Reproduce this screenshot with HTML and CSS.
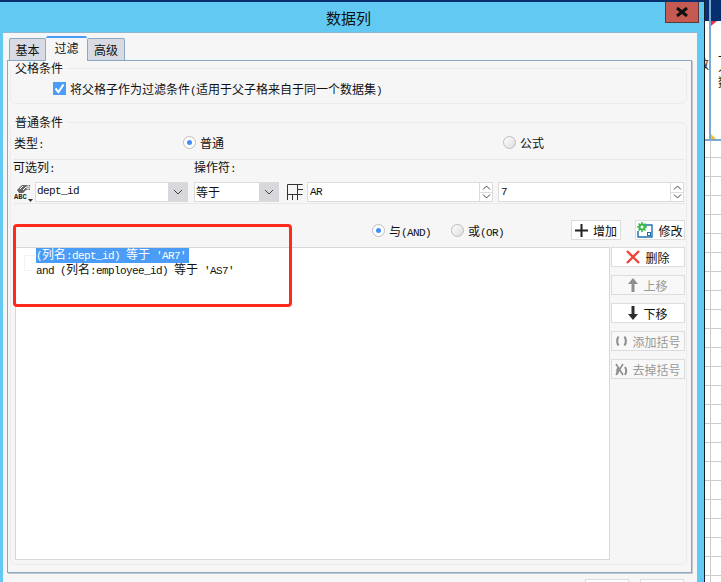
FILE: index.html
```html
<!DOCTYPE html>
<html>
<head>
	<meta charset="utf-8">
	<title>数据列</title>
	<link rel="stylesheet" href="styles.css">
</head>
<body>
	<div class="page">
		<div class="dialog">
			<div class="title-bar">
				<span>数据列</span>
				<div class="close-btn">
					<svg width="14" height="10" viewBox="0 0 14 10"><path d="M2 1 L12 9 M12 1 L2 9" stroke="#111" stroke-width="3" fill="none"/></svg>
				</div>
			</div>
			<div class="dialog-body">
				<div class="tabs">
					<div class="tab">基本</div>
					<div class="tab tab-on">过滤</div>
					<div class="tab">高级</div>
				</div>
				<div class="tab-pane">
					<fieldset class="group group-parent">
						<legend>父格条件</legend>
						<div class="check-row">
							<span class="check-box">
								<svg width="13" height="13" viewBox="0 0 13 13"><path d="M2.5 6.5 L5.5 10 L10.5 2.5" stroke="#fff" stroke-width="2" fill="none"/></svg>
							</span>
							<span>将父格子作为过滤条件<span class="lat">(</span>适用于父子格来自于同一个数据集<span class="lat">)</span></span>
						</div>
					</fieldset>

					<fieldset class="group group-normal">
						<legend>普通条件</legend>
						<div class="group-inner">
							<div class="type-row">
								<span>类型<span class="lat">:</span></span>
								<label class="radio-item"><i class="radio radio-on"></i><span>普通</span></label>
								<label class="radio-item"><i class="radio"></i><span>公式</span></label>
							</div>
							<div class="label-row">
								<span class="label-col">可选列<span class="lat">:</span></span>
								<span>操作符<span class="lat">:</span></span>
							</div>
							<div class="field-row">
								<svg class="abc-icon" width="19" height="19" viewBox="0 0 19 19">
									<path d="M3 7 L8 2 H16 V7 H12 L9 10 H5 Z" fill="#666"/>
									<path d="M6 6 L9 3 M9 7 L12 4 M13 3 H15 V6 H13 Z" stroke="#fff" stroke-width="1" fill="none"/>
									<text x="0" y="15.5" class="abc-text">ABC</text>
									<path d="M14 16 H19 L16.5 19 Z" fill="#333"/>
								</svg>
								<div class="combo combo-col">
									<span class="combo-text lat">dept_id</span>
									<span class="combo-arrow"><svg width="10" height="6" viewBox="0 0 10 6"><path d="M1 1 L5 5 L9 1" stroke="#444" fill="none"/></svg></span>
								</div>
								<div class="combo combo-op">
									<span class="combo-text">等于</span>
									<span class="combo-arrow"><svg width="10" height="6" viewBox="0 0 10 6"><path d="M1 1 L5 5 L9 1" stroke="#444" fill="none"/></svg></span>
								</div>
								<svg class="cell-icon" width="16" height="16" viewBox="0 0 16 16">
									<path d="M.5 16 V.5 H15.5 M.5 10.5 H15.5 M5.5 10.5 V16 M10.5 .5 V16 M10.5 5.5 H16" stroke="#333" fill="none"/>
								</svg>
								<div class="spin-field">
									<span class="spin-text lat">AR</span>
									<span class="spin-btns">
										<i><svg width="9" height="5" viewBox="0 0 9 5"><path d="M1 4.5 L4.5 1 L8 4.5" stroke="#444" fill="none"/></svg></i>
										<i><svg width="9" height="5" viewBox="0 0 9 5"><path d="M1 .5 L4.5 4 L8 .5" stroke="#444" fill="none"/></svg></i>
									</span>
								</div>
								<div class="spin-field">
									<span class="spin-text lat">7</span>
									<span class="spin-btns">
										<i><svg width="9" height="5" viewBox="0 0 9 5"><path d="M1 4.5 L4.5 1 L8 4.5" stroke="#444" fill="none"/></svg></i>
										<i><svg width="9" height="5" viewBox="0 0 9 5"><path d="M1 .5 L4.5 4 L8 .5" stroke="#444" fill="none"/></svg></i>
									</span>
								</div>
							</div>

							<div class="logic-row">
								<label class="radio-item logic-and"><i class="radio radio-on"></i><span>与<span class="lat">(AND)</span></span></label>
								<label class="radio-item"><i class="radio"></i><span>或<span class="lat">(OR)</span></span></label>
								<div class="logic-btns">
									<div class="btn">
										<svg width="13" height="13" viewBox="0 0 13 13"><path d="M6.5 0 V13 M0 6.5 H13" stroke="#222" stroke-width="2"/></svg>
										增加
									</div>
									<div class="btn">
										<svg width="16" height="16" viewBox="0 0 16 16">
											<path d="M7 3 H15 V15 H1 V9" stroke="#1f6fb0" stroke-width="1.4" fill="#fff"/>
											<path d="M5 0 V10 M0 5 H10 M1.5 1.5 L8.5 8.5 M8.5 1.5 L1.5 8.5" stroke="#3cb84a" stroke-width="1.6"/>
											<circle cx="5" cy="5" r="3.6" fill="#3cb84a"/>
											<circle cx="5" cy="5" r="1.5" fill="#fff"/>
											<rect x="10.5" y="10.5" width="3" height="3" fill="#fff" stroke="#1f6fb0"/>
										</svg>
										修改
									</div>
								</div>
							</div>

							<div class="main-row">
								<div class="cond-list">
									<i class="tree-root"></i>
									<div class="cond-line cond-sel"><span class="lat">(</span>列名<span class="lat">:dept_id) </span>等于<span class="lat"> 'AR7'</span></div>
									<div class="cond-line"><span class="lat">and (</span>列名<span class="lat">:employee_id) </span>等于<span class="lat"> 'AS7'</span></div>
								</div>
								<div class="side-btns">
									<div class="btn">
										<svg width="14" height="14" viewBox="0 0 14 14"><path d="M1 1 L13 13 M13 1 L1 13" stroke="#f0453a" stroke-width="2.4"/></svg>
										删除
									</div>
									<div class="btn btn-off">
										<svg width="10" height="14" viewBox="0 0 10 14"><path d="M5 0 L10 6 H6.5 V14 H3.5 V6 H0 Z" fill="#8e8e8e"/></svg>
										上移
									</div>
									<div class="btn">
										<svg width="10" height="14" viewBox="0 0 10 14"><path d="M5 14 L10 8 H6.5 V0 H3.5 V8 H0 Z" fill="#2e2e2e"/></svg>
										下移
									</div>
									<div class="btn btn-off btn-long">
										<svg width="13" height="10" viewBox="0 0 13 10"><path d="M3.5 .5 Q.8 5 3.5 9.5 M9.5 .5 Q12.2 5 9.5 9.5" stroke="#8e8e8e" stroke-width="2" fill="none"/></svg>
										添加括号
									</div>
									<div class="btn btn-off btn-long">
										<svg width="13" height="13" viewBox="0 0 13 13"><path d="M1 1 L8 12 M8 1 L1 12" stroke="#8e8e8e" stroke-width="1.6"/><path d="M3 5 Q1.6 8 3 11 M10 4 Q12.4 8 10 12" stroke="#8e8e8e" stroke-width="2" fill="none"/></svg>
										去掉括号
									</div>
								</div>
							</div>
						</div>
					</fieldset>
				</div>
				<div class="dialog-foot">
					<div class="foot-btn"></div>
					<div class="foot-btn"></div>
				</div>
			</div>
			<div class="red-mark"></div>
		</div>

		<div class="backdrop">
			<div class="back-head">
				<div class="back-navy"></div>
				<div class="back-line"></div>
				<div class="back-navy"></div>
				<div class="back-left">数</div>
				<div class="back-right">上<br>人<br>数</div>
			</div>
			<div class="back-grid"></div>
		</div>
	</div>
</body>
</html>
```

FILE: styles.css
```css
* {
	margin: 0;
	padding: 0;
	box-sizing: border-box;
}
body {
	background: #fff;
	overflow: hidden;
	font-family: "Noto Sans CJK SC", "Liberation Sans", sans-serif;
	font-size: 12px;
	color: #111;
}
i {
	font-style: normal;
}
.lat {
	font-family: "Liberation Mono", monospace;
	font-size: 11px;
	letter-spacing: -.6px;
}
.page {
	display: flex;
	width: 721px;
	height: 582px;
	overflow: hidden;
}

.dialog {
	position: relative;
	flex: none;
	width: 705px;
	height: 582px;
	border-top: 2px solid #05306f;
	border-right: 1px solid #15202b;
	background: #62caf2;
}
.title-bar {
	position: relative;
	display: flex;
	justify-content: center;
	align-items: center;
	width: 697px;
	height: 30px;
	font-size: 15px;
}
.close-btn {
	position: absolute;
	top: 0;
	left: 665px;
	display: flex;
	justify-content: center;
	align-items: center;
	width: 34px;
	height: 21px;
	border: 1px solid #5a3a38;
	border-top: 0;
	background: #c45a52;
}

.dialog-body {
	margin-left: 3px;
	padding: 3px 0 0 4px;
	width: 694px;
	height: 550px;
	border-top: 1px solid #8fb8d0;
	background: #f6f6f6;
	overflow: hidden;
}
.tabs {
	display: flex;
	align-items: flex-end;
	margin-left: 2px;
	height: 24px;
}
.tab {
	width: 37px;
	height: 22px;
	border: 1px solid #8aa8c4;
	border-bottom: 0;
	border-radius: 2px 2px 0 0;
	background: #d8dbe3;
	line-height: 22px;
	text-align: center;
}
.tab-on {
	position: relative;
	width: 41px;
	height: 25px;
	margin-bottom: -1px;
	border: 0;
	border-top: 2px solid #4a9cf6;
	background: #f6f6f6;
	line-height: 20px;
}
.tab:last-child {
	width: 38px;
}
.tab-pane {
	padding: 0 4px 0 2px;
	width: 685px;
	height: 513px;
	border: 1px solid #8aa8c4;
	box-shadow: 1px 1px 0 #c4c8cc;
}

.group {
	border: 1px solid #ececec;
	border-radius: 6px;
}
.group legend {
	padding: 0 4px;
	line-height: 14px;
}
.group-parent {
	padding-top: 5px;
	height: 43px;
}
.group-normal {
	margin-top: 11px;
	height: 450px;
}
.group-inner {
	padding: 5px 1px 4px 3px;
}
.check-row {
	display: flex;
	align-items: center;
	gap: 4px;
	margin-left: 42px;
	height: 16px;
}
.check-box {
	display: block;
	width: 13px;
	height: 13px;
	background: #4a9cf6;
}
.check-box svg {
	display: block;
}

.radio {
	display: block;
	position: relative;
	width: 13px;
	height: 13px;
	border: 1px solid #bdbdbd;
	border-radius: 50%;
	background: linear-gradient(135deg, #fff, #dcdcdc);
}
.radio-on {
	background: #fff;
}
.radio-on:after {
	content: "";
	position: absolute;
	top: 3px;
	left: 3px;
	width: 5px;
	height: 5px;
	border-radius: 50%;
	background: #3f8ff7;
}
.radio-item {
	display: flex;
	align-items: center;
	gap: 4px;
}

.type-row {
	display: grid;
	grid-template-columns: 169px 320px auto;
	align-items: center;
	height: 26px;
	padding-bottom: 9px;
	border-bottom: 1px solid #e8e8e8;
}
.label-row {
	display: flex;
	align-items: center;
	margin-left: -1px;
	height: 17px;
	padding-bottom: 4px;
}
.label-col {
	width: 181px;
}
.field-row {
	display: flex;
	align-items: center;
	margin-top: 5px;
	height: 22px;
	padding-bottom: 1px;
	border-bottom: 1px solid #e8e8e8;
}
.abc-icon {
	flex: none;
	margin-right: 2px;
}
.abc-text {
	font-family: "Liberation Mono", monospace;
	font-size: 7px;
	font-weight: bold;
	fill: #222;
}
.combo {
	display: flex;
	flex: none;
	height: 20px;
	border: 1px solid #dcdcdc;
	background: #fff;
}
.combo-col {
	width: 153px;
	margin-right: 6px;
}
.combo-op {
	width: 85px;
	margin-right: 8px;
}
.combo-text {
	flex: 1;
	padding-left: 1px;
	line-height: 17px;
}
.combo-arrow {
	display: flex;
	justify-content: center;
	align-items: center;
	width: 20px;
	margin-right: -1px;
	background: #d8d8dc;
}
.cell-icon {
	flex: none;
	margin-right: 4px;
}
.spin-field {
	display: flex;
	flex: none;
	width: 186px;
	height: 20px;
	border: 1px solid #dcdcdc;
	background: #fff;
}
.spin-field + .spin-field {
	margin-left: 5px;
}
.spin-text {
	flex: 1;
	padding-left: 2px;
	line-height: 18px;
}
.spin-btns {
	display: flex;
	flex-direction: column;
	width: 13px;
	border-left: 1px solid #dcdcdc;
}
.spin-btns i {
	display: flex;
	flex: 1;
	justify-content: center;
	align-items: center;
}
.spin-btns i:first-child {
	border-bottom: 1px solid #dcdcdc;
}

.logic-row {
	display: flex;
	align-items: center;
	height: 43px;
	padding: 9px 0 0 358px;
}
.logic-and {
	width: 79px;
}
.logic-btns {
	display: flex;
	gap: 14px;
	margin-left: auto;
}
.logic-btns .btn {
	width: 50px;
}
.btn {
	display: flex;
	justify-content: center;
	align-items: center;
	gap: 5px;
	height: 20px;
	border: 1px solid #dcdcdc;
	background: #fff;
}
.btn-off {
	color: #999;
	background: #f8f8f8;
}
.btn-long {
	gap: 4px;
}

.main-row {
	display: flex;
	gap: 1px;
	margin-left: 1px;
	height: 313px;
}
.cond-list {
	position: relative;
	flex: none;
	padding-left: 20px;
	width: 595px;
	border: 1px solid #d8d8d8;
	background: #fff;
}
.cond-line {
	width: fit-content;
	height: 15px;
	line-height: 12px;
	white-space: pre;
}
.cond-sel {
	padding-right: 3px;
	background: #4a9cf6;
	color: #fff;
}
.tree-root {
	position: absolute;
	top: 7px;
	left: 8px;
	width: 11px;
	height: 16px;
	border: 1px solid #f3f3f3;
	border-right: 0;
}
.side-btns {
	display: flex;
	flex-direction: column;
	gap: 8px;
	width: 74px;
}

.dialog-foot {
	display: flex;
	gap: 11px;
	padding: 6px 0 0 578px;
}
.foot-btn {
	width: 44px;
	height: 24px;
	border: 1px solid #dcdcdc;
	background: #fff;
}

.red-mark {
	position: absolute;
	top: 222px;
	left: 13px;
	width: 279px;
	height: 83px;
	border: 3px solid #ff2a1a;
	border-radius: 4px;
}

.backdrop {
	flex: none;
	width: 16px;
}
.back-head {
	display: grid;
	grid-template-columns: 4px 2px 10px;
	grid-template-rows: 21px 118px;
	height: 141px;
	border-bottom: 2px solid #7fa8d0;
}
.back-navy {
	background: #05306f;
}
.back-line {
	grid-row: 1 / 3;
	grid-column: 2;
	background: #7fa8d0;
}
.back-left {
	grid-row: 2;
	grid-column: 1;
	overflow: hidden;
	padding-top: 36px;
	direction: rtl;
	line-height: 14px;
}
.back-right {
	position: relative;
	grid-row: 2;
	grid-column: 3;
	overflow: hidden;
	padding: 23px 0 0 7px;
	line-height: 15px;
	white-space: nowrap;
}
.back-right:before {
	content: "";
	position: absolute;
	top: 0;
	left: 0;
	border-top: 5px solid #f0304a;
	border-right: 6px solid transparent;
}
.back-right:after {
	content: "";
	position: absolute;
	bottom: 0;
	left: 0;
	border-bottom: 5px solid #f4c020;
	border-right: 5px solid transparent;
}
.back-grid {
	height: 441px;
	background:
		linear-gradient(#ccc, #ccc) 5px 0 / 1px 100% no-repeat,
		repeating-linear-gradient(#fff 0, #fff 18px, #ccc 18px, #ccc 19px) 0 -2px;
}
```
